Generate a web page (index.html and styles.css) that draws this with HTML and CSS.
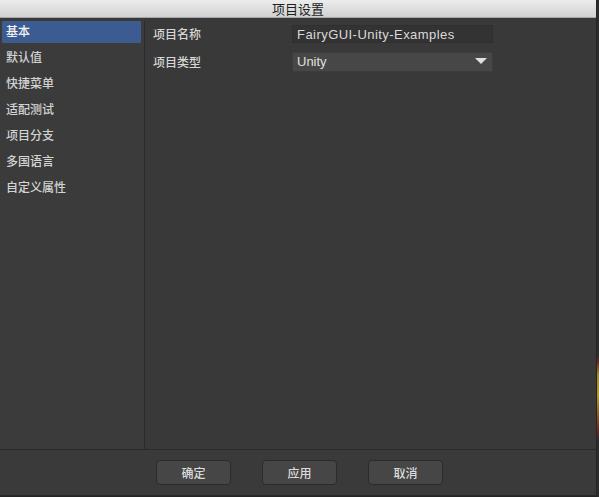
FILE: index.html
```html
<!DOCTYPE html>
<html lang="zh">
<head>
  <meta charset="utf-8">
  <title>项目设置</title>
  <link rel="stylesheet" href="styles.css">
</head>
<body>
  <div class="window">
    <div class="titlebar">项目设置</div>

    <div class="content">
      <ul class="sidebar">
        <li class="selected">基本</li>
        <li>默认值</li>
        <li>快捷菜单</li>
        <li>适配测试</li>
        <li>项目分支</li>
        <li>多国语言</li>
        <li>自定义属性</li>
      </ul>

      <div class="main">
        <div class="row">
          <span class="label">项目名称</span>
          <div class="textfield">FairyGUI-Unity-Examples</div>
        </div>
        <div class="row">
          <span class="label">项目类型</span>
          <div class="combo">
            <span>Unity</span>
            <svg width="12" height="7" viewBox="0 0 12 7"><path d="M0 0 H12 L6 6 Z" fill="#e0e0e0"/></svg>
          </div>
        </div>
      </div>
    </div>

    <div class="footer">
      <button class="btn">确定</button>
      <button class="btn">应用</button>
      <button class="btn">取消</button>
    </div>
  </div>
  <div class="desktop"></div>
</body>
</html>
```

FILE: styles.css
```css
body{
  margin: 0;
  width: 599px;
  height: 497px;
  display: flex;
  background: #242424;
  font-family: "Noto Sans CJK SC", "Liberation Sans", sans-serif;
  font-size: 12px;
  font-weight: 500;
  overflow: hidden;
}

.window{
  width: 596px;
  height: 495px;
  display: flex;
  flex-direction: column;
  background: #393939;
  border-right: 1px solid #262626;
  border-bottom: 1px solid #2a2a2a;
}

.desktop{
  flex: 1;
  background: linear-gradient(#2c2c2c 0, #2c2c2c 355px, #6b2a22 362px, #a08a2c 375px, #b49a2e 395px, #6b2a22 430px, #2c2c2c 440px);
}

.titlebar{
  height: 18px;
  line-height: 18px;
  text-align: center;
  font-size: 13px;
  font-weight: 400;
  color: #1e1e1e;
  background: linear-gradient(#ececec, #d2d2d2);
  border-bottom: 1px solid #a8a8a8;
  box-sizing: border-box;
}

.content{
  flex: 1;
  display: flex;
  padding-top: 3px;
}

.sidebar{
  list-style: none;
  margin: 0;
  padding: 0 3px 0 2px;
  width: 139px;
  background: #3b3b3b;
  border-right: 1px solid #2a2a2a;
}

.sidebar li{
  height: 26px;
  line-height: 20px;
  padding-left: 4px;
  color: #d4d4d4;
}

.sidebar li.selected{
  height: 22px;
  line-height: 20px;
  margin-bottom: 4px;
  background: #3b5b91;
  color: #f2f2f2;
}

.main{
  flex: 1;
  padding: 3px 0 0 8px;
}

.row{
  display: flex;
  align-items: center;
  height: 19px;
  margin-bottom: 9px;
}

.label{
  width: 139px;
  color: #d8d8d8;
}

.textfield{
  width: 201px;
  height: 18px;
  line-height: 17px;
  padding-left: 4px;
  background: #333333;
  border: 1px solid #2f2f2f;
  color: #dadada;
  font-family: "Liberation Sans", sans-serif;
  font-size: 13px;
  font-weight: 400;
  letter-spacing: 0.45px;
  box-sizing: border-box;
}

.combo{
  width: 201px;
  height: 20px;
  padding: 0 4px;
  display: flex;
  justify-content: space-between;
  align-items: center;
  background: #474747;
  border: 1px solid #3c3c3c;
  color: #e0e0e0;
  font-family: "Liberation Sans", sans-serif;
  font-size: 13px;
  font-weight: 400;
  box-sizing: border-box;
}

.combo svg{
  margin-right: 1px;
}

.footer{
  height: 46px;
  border-top: 1px solid #2a2a2a;
  background: #3a3a3a;
  display: flex;
  gap: 31px;
  padding: 10px 0 0 156px;
  box-sizing: border-box;
}

.btn{
  width: 75px;
  height: 25px;
  background: #464646;
  border: 1px solid #2b2b2b;
  border-radius: 4px;
  color: #dcdcdc;
  font-family: inherit;
  font-size: 12px;
  font-weight: 500;
  padding: 0;
}
```
